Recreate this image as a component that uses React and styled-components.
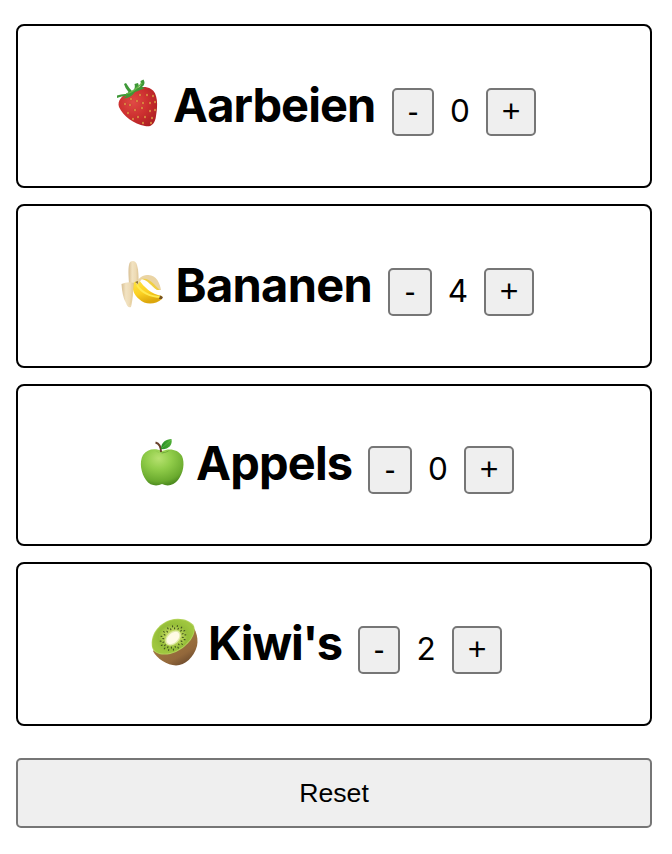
import React, { useState } from "react";
import styled, { createGlobalStyle } from "styled-components";

const GlobalStyle = createGlobalStyle`
  * { box-sizing: border-box; }
  body { margin: 0; background: #fff; color: #000; font-family: Inter, sans-serif; }
`;

const Page = styled.main`
  display: flex;
  flex-direction: column;
  width: 672px;
  height: 854px;
  padding: 24px 20px 26px 16px;
`;

const List = styled.div`
  display: flex;
  flex-direction: column;
  gap: 16px;
`;

const Card = styled.section`
  display: flex;
  align-items: flex-start;
  height: ${(p) => p.$height}px;
  padding-left: ${(p) => p.$inset}px;
  border: 2px solid #000;
  border-radius: 8px;
`;

const Art = styled.svg`
  flex: none;
  width: 64px;
  height: 64px;
  margin-top: ${(p) => p.$top}px;
`;

const Name = styled.h2`
  flex: none;
  width: ${(p) => p.$width}px;
  margin: ${(p) => p.$top}px 0 0;
  padding-left: ${(p) => p.$indent}px;
  font-size: 47px;
  line-height: 58px;
  font-weight: 700;
  letter-spacing: ${(p) => p.$tracking}px;
  white-space: nowrap;
`;

const Counter = styled.div`
  display: flex;
  margin-top: ${(p) => p.$top}px;
`;

const Step = styled.button`
  width: ${(p) => p.$width}px;
  height: 48px;
  padding: 0 0 2px;
  border: 2px solid #767676;
  border-radius: 5px;
  background: #efefef;
  color: #000;
  font: 32px/36px "Liberation Sans", sans-serif;
`;

const Count = styled.span`
  width: 52px;
  font-size: 31.5px;
  line-height: 46px;
  text-align: center;
`;

const Reset = styled.button`
  height: 70px;
  margin-top: 32px;
  padding: 0;
  border: 2px solid #767676;
  border-radius: 5px;
  background: #efefef;
  color: #000;
  font: 26.67px/30px "Liberation Sans", sans-serif;
`;

const Strawberry = () => (
  <>
    <defs>
      <radialGradient id="berry" cx="38%" cy="38%" r="75%">
        <stop offset="0" stopColor="#e04a45" />
        <stop offset=".5" stopColor="#cd3030" />
        <stop offset="1" stopColor="#ab1d22" />
      </radialGradient>
    </defs>
    <path d="M15 28C18 24 23 22 27 21C31 17 39 15.500 45 19C52 23 52 35 50 46C49 54 45 57.500 39 56C28 54 17 46 13 37C12 34 12.500 31 15 28Z" fill="url(#berry)" />
    <path d="M11 25.500Q16 23.500 21 24L22.500 22Q19 18 18 14L20 13Q23 18 26 21Q30 19 28.500 14L32 13Q34 17 31 19Q36 16 34.500 11L37.500 9.500Q40 14 36 17L39 18Q32 21 29 22Q25 28 17 28.500L21 26Q15 26 11 28Z" fill="#3e9837" />
    <path d="M20 24Q28 22 36 13" stroke="#68b94a" strokeWidth="1.2" fill="none" />
    {[[25,29],[34,25],[41,25],[47,26],[19,34],[24,35],[31,31],[37,33],[44,33],[49,32],[29,40],[36,38],[44,41],[22,43],[32,47],[39,47],[46,48],[49,40],[45,53],[37,53],[27,49]].map(([x, y]) => (
      <ellipse key={`${x}-${y}`} cx={x} cy={y} rx="1" ry="1.3" fill="#efb64f" stroke="#a92923" strokeWidth=".35" />
    ))}
  </>
);

const Banana = () => (
  <>
    <defs>
      <linearGradient id="peel" x1="0" x2="1">
        <stop offset="0" stopColor="#d8bf93" />
        <stop offset=".35" stopColor="#f2e3c2" />
        <stop offset=".7" stopColor="#eddab4" />
        <stop offset="1" stopColor="#dac08e" />
      </linearGradient>
      <linearGradient id="skin" x1="0" y1="0" x2=".3" y2="1">
        <stop offset="0" stopColor="#ffe545" />
        <stop offset=".6" stopColor="#fbd022" />
        <stop offset="1" stopColor="#dca70c" />
      </linearGradient>
    </defs>
    <path d="M21 31C20.500 23 20 15 21.500 11C23 8 28 8 29 13C31 19 30 25 31 31L27 35Z" fill="url(#peel)" />
    <path d="M25 31L31 28C36 35 43 42 54 44L54 47C47 53 37 53 31 47C26 43 24 38 25 31Z" fill="url(#skin)" />
    <path d="M29 33C33 40 42 45 53 45" fill="none" stroke="#ffe94f" strokeWidth="2" />
    <path d="M13.500 32Q20 29 26 31C25 37 25 48 23 55C20.500 56 19 54 18 51C15 46 14 39 13.500 32Z" fill="url(#peel)" />
    <path d="M24 32Q25 43 22 53" fill="none" stroke="#e9d2a1" strokeWidth="1" />
    <path d="M28 31C30 27 34 23 39 23C48 22 52 31 53 38L50 38C45 34 41 28 34 27L29 33Z" fill="#ead4a4" />
    <path d="M33 27C42 25 46 33 52 38L49 38C43 34 40 28 33 27Z" fill="#f1cf42" />
    <path d="M52 43.500L55 45L54 47L51 47Z" fill="#765323" />
    <path d="M27 30L30 29L30 32Z" fill="#8d7436" />
  </>
);

const Apple = () => (
  <>
    <defs>
      <radialGradient id="apple" cx="42%" cy="25%" r="75%">
        <stop offset="0" stopColor="#b7e170" />
        <stop offset=".4" stopColor="#91cd4a" />
        <stop offset=".85" stopColor="#6aaa2e" />
        <stop offset="1" stopColor="#4f8d21" />
      </radialGradient>
      <linearGradient id="leaf">
        <stop offset="0" stopColor="#278d28" />
        <stop offset="1" stopColor="#4fae35" />
      </linearGradient>
    </defs>
    <path d="M32 21C25 18 17 19 13 25C9 32 11 43 16 50C20 56 27 56.500 32 54C38 57 44 55 48 50C53.500 43 55 33 52 26C48 19 39 18 32 21Z" fill="url(#apple)" />
    <path d="M25 21Q32 25 40 20Q36 24 31 23Z" fill="#5a982a" />
    <path d="M25.500 12.500Q31 14 31 22" fill="none" stroke="#69432c" strokeWidth="2" />
    <path d="M31 19C31 12 36 9.500 41.500 9C43 16 37 20 31 19Z" fill="url(#leaf)" />
    <path d="M32 18L41 10" stroke="#77c64d" strokeWidth=".5" />
  </>
);

const Kiwi = () => (
  <>
    <defs>
      <linearGradient id="rind" x1=".4" y1=".3" x2=".8" y2="1">
        <stop offset="0" stopColor="#a57b41" />
        <stop offset=".65" stopColor="#93683b" />
        <stop offset="1" stopColor="#65452a" />
      </linearGradient>
      <radialGradient id="kiwi">
        <stop offset="0" stopColor="#eeefb4" />
        <stop offset=".35" stopColor="#bed65c" />
        <stop offset=".7" stopColor="#94bd38" />
        <stop offset="1" stopColor="#9fc63f" />
      </radialGradient>
    </defs>
    <path d="M43 10.500C53 14 57 27 55 36C52 47 43 55.500 34 55.500C25 55 15 49 11 41Z" fill="url(#rind)" />
    <path d="M10 37C8 25 16 14 28 10C38 7 48 10 52 16C55 25 46 36 34 42C25 46 12 46 10 37Z" fill="#b4d45c" />
    <path d="M10.600 36.500C9 25 17 14.500 28 10.700C38 8 47.500 11 51.300 16.500C54 25 45 35.500 33.500 41.200C25 45 12.500 45 10.600 36.500Z" fill="url(#kiwi)" />
    <g transform="rotate(-42 31 28)">
      {Array.from({ length: 32 }, (_, i) => {
        const angle = i * 11.25;
        const radians = angle * Math.PI / 180;
        const radius = i % 2 ? 13.5 : 10.8;
        const x = 31 + Math.cos(radians) * radius;
        const y = 28 + Math.sin(radians) * radius * 0.8;
        return <ellipse key={i} cx={x} cy={y} rx="1.1" ry=".6" transform={`rotate(${angle} ${x} ${y})`} fill="#43551f" />;
      })}
      <ellipse cx="31" cy="28" rx="9" ry="6" fill="#e2ecac" />
      <ellipse cx="31" cy="28" rx="7.500" ry="4.800" fill="#fffbe5" />
    </g>
  </>
);

const fruits = [
  { name: "Aarbeien", initial: 0, Icon: Strawberry, height: 164, inset: 88, iconTop: 44, nameTop: 50, width: 222, indent: 3, tracking: -0.95, top: 62, minus: 42 },
  { name: "Bananen", initial: 4, Icon: Banana, height: 164, inset: 90, iconTop: 46, nameTop: 50, width: 216, indent: 3.5, tracking: -0.7, top: 62, minus: 44 },
  { name: "Appels", initial: 0, Icon: Apple, height: 162, inset: 112, iconTop: 44, nameTop: 48, width: 174, indent: 2, tracking: -0.85, top: 60, minus: 44 },
  { name: "Kiwi's", initial: 2, Icon: Kiwi, height: 164, inset: 124, iconTop: 46, nameTop: 50, width: 152, indent: 2, tracking: -1.3, top: 62, minus: 42 },
];

export default function App() {
  const [counts, setCounts] = useState(fruits.map((fruit) => fruit.initial));
  const change = (index, amount) =>
    setCounts((values) => values.map((value, i) => (i === index ? Math.max(0, value + amount) : value)));

  return (
    <>
      <GlobalStyle />
      <Page>
        <List>
          {fruits.map(({ name, Icon, height, inset, iconTop, nameTop, width, indent, tracking, top, minus }, i) => (
            <Card key={name} $height={height} $inset={inset}>
              <Art $top={iconTop} viewBox="0 0 64 64" aria-hidden="true"><Icon /></Art>
              <Name $top={nameTop} $width={width} $indent={indent} $tracking={tracking}>{name}</Name>
              <Counter $top={top}>
                <Step $width={minus} onClick={() => change(i, -1)}>-</Step>
                <Count>{counts[i]}</Count>
                <Step $width={50} onClick={() => change(i, 1)}>+</Step>
              </Counter>
            </Card>
          ))}
        </List>
        <Reset onClick={() => setCounts(fruits.map(() => 0))}>Reset</Reset>
      </Page>
    </>
  );
}
